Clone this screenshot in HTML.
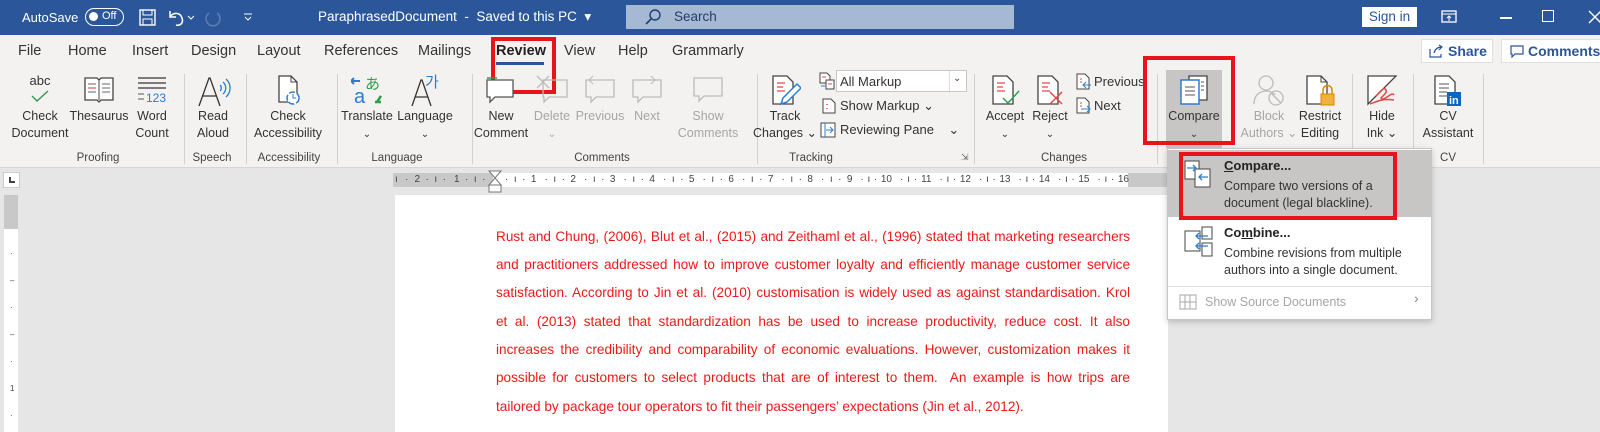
<!DOCTYPE html>
<html><head><meta charset="utf-8">
<style>
*{margin:0;padding:0;box-sizing:border-box}
body{width:1600px;height:432px;overflow:hidden;background:#e6e6e6;font-family:"Liberation Sans",sans-serif;position:relative}
.a{position:absolute}
.title{left:0;top:0;width:1600px;height:35px;background:#2b579a;color:#fff;font-size:13px}
.rib{left:0;top:35px;width:1600px;height:133px;background:#f3f2f1;border-bottom:1px solid #d6d6d6}
.tab{top:43px;font-size:14.5px;color:#333}
.lbl{font-size:12.5px;color:#333;text-align:center;line-height:17px;white-space:nowrap;transform:translateX(-50%);top:108px}
.dis{color:#a6a6a6}
.grp{font-size:11.5px;color:#444;top:152px;transform:translateX(-50%);white-space:nowrap}
.sep{top:74px;width:1px;height:90px;background:#d2d0ce}
.ico{transform:translateX(-50%);top:74px}
.doc{font-size:13.6px;color:#f01818;left:496px;width:634px;white-space:nowrap;text-align:justify;text-align-last:justify}
.small{font-size:12.5px;color:#333;white-space:nowrap}
.ru{position:absolute;top:173px;height:14px;display:flex;font-size:10px;color:#444;white-space:nowrap}
.ru span{display:inline-block;width:39.5px;text-align:justify;text-align-last:justify;line-height:14px}
.rr span{padding-left:8px;margin-right:0}
.rl span{padding-right:8px}
</style></head><body>
<!-- title bar -->
<div class="a title">
 <span class="a" style="left:22px;top:10px">AutoSave</span>
 <div class="a" style="left:85px;top:8px;width:39px;height:18px;border:1.5px solid #fff;border-radius:9px"><div class="a" style="left:3px;top:3px;width:9px;height:9px;border-radius:50%;background:#fff"></div><span class="a" style="left:16px;top:1px;font-size:11px">Off</span></div>
 <svg class="a" style="left:139px;top:9px" width="17" height="17"><rect x="1" y="1" width="15" height="15" fill="none" stroke="#fff" stroke-width="1.4"/><rect x="4" y="1" width="9" height="5" fill="none" stroke="#fff"/><rect x="4" y="10" width="9" height="6" fill="none" stroke="#fff"/></svg>
 <svg class="a" style="left:166px;top:8px" width="30" height="18"><path d="M4 3v6h6M4 9c3-5 10-5 12 1s-3 8-6 7" fill="none" stroke="#fff" stroke-width="1.5"/><path d="M22 8l3 3 3-3" fill="none" stroke="#fff"/></svg>
 <svg class="a" style="left:203px;top:8px" width="20" height="20"><path d="M14 5a7 7 0 1 1-8 0" fill="none" stroke="#5d7fb5" stroke-width="1.5"/></svg>
 <svg class="a" style="left:243px;top:12px" width="10" height="10"><path d="M1 2h8M2 5l3 3 3-3" fill="none" stroke="#fff"/></svg>
 <span class="a" style="left:318px;top:9px;font-size:13.5px">ParaphrasedDocument&nbsp; - &nbsp;Saved to this PC &nbsp;▾</span>
 <div class="a" style="left:626px;top:5px;width:388px;height:24px;background:#a6b9d4"><svg class="a" style="left:18px;top:3px" width="18" height="18"><circle cx="11" cy="7" r="5" fill="none" stroke="#1f3f70" stroke-width="1.4"/><path d="M7 11l-5 5" stroke="#1f3f70" stroke-width="1.6"/></svg><span class="a" style="left:48px;top:4px;color:#223e6b;font-size:13.5px">Search</span></div>
 <div class="a" style="left:1362px;top:7px;width:55px;height:20px;background:#fff;color:#2b579a;font-size:13.5px;text-align:center;line-height:20px">Sign in</div>
 <svg class="a" style="left:1441px;top:10px" width="16" height="14"><rect x="1" y="1" width="14" height="11" fill="none" stroke="#fff" stroke-width="1.3"/><path d="M1 4h14M8 11V6M6 8l2-2 2 2" stroke="#fff" fill="none"/></svg>
 <div class="a" style="left:1500px;top:17px;width:12px;height:1.5px;background:#fff"></div>
 <div class="a" style="left:1542px;top:10px;width:12px;height:12px;border:1.4px solid #fff"></div>
 <svg class="a" style="left:1588px;top:10px" width="12" height="14"><path d="M1 1l12 12M13 1L1 13" stroke="#fff" stroke-width="1.4"/></svg>
</div>
<!-- ribbon -->
<div class="a rib"></div>
<span class="a tab" style="left:18px">File</span>
<span class="a tab" style="left:68px">Home</span>
<span class="a tab" style="left:132px">Insert</span>
<span class="a tab" style="left:191px">Design</span>
<span class="a tab" style="left:257px">Layout</span>
<span class="a tab" style="left:324px">References</span>
<span class="a tab" style="left:418px">Mailings</span>
<span class="a tab" style="left:496px;font-weight:bold;color:#222">Review</span>
<div class="a" style="left:496px;top:62px;width:48px;height:3px;background:#2b579a"></div>
<span class="a tab" style="left:564px">View</span>
<span class="a tab" style="left:618px">Help</span>
<span class="a tab" style="left:672px">Grammarly</span>
<div class="a" style="left:491px;top:37px;width:65px;height:57px;border:4px solid #e8141c"></div>
<div class="a" style="left:1421px;top:39px;width:72px;height:24px;background:#fff;border:1px solid #e1dfdd;color:#2b579a;font-size:14px;font-weight:bold;line-height:22px;padding-left:26px">Share<svg class="a" style="left:7px;top:4px" width="15" height="14"><path d="M1 5v8h11v-3M5 9c1-4 4-6 8-6M10 1l3 2-3 3" fill="none" stroke="#2b579a" stroke-width="1.2"/></svg></div>
<div class="a" style="left:1501px;top:39px;width:100px;height:24px;background:#fff;border:1px solid #e1dfdd;color:#2b579a;font-size:14px;font-weight:bold;line-height:22px;padding-left:26px">Comments<svg class="a" style="left:8px;top:5px" width="14" height="13"><path d="M1 1h12v8H5l-3 3V9H1z" fill="none" stroke="#2b579a" stroke-width="1.2"/></svg></div>

<!-- Proofing -->
<div class="a ico" style="left:40px;font-size:13px;color:#333;top:73px">abc</div>
<svg class="a" style="left:30px;top:89px" width="20" height="14"><path d="M2 7l5 5 11-10" fill="none" stroke="#2e9e48" stroke-width="1.4"/></svg>
<div class="a lbl" style="left:40px">Check<br>Document</div>
<svg class="a ico" style="left:99px" width="32" height="30"><path d="M2 4h12l2 2 2-2h12v22H18l-2 2-2-2H2z" fill="#fff" stroke="#444" stroke-width="1.3"/><path d="M16 6v20" stroke="#444"/><path d="M5 10h8M5 14h8M5 18h8M19 10h8M19 14h8M19 18h8" stroke="#666"/><path d="M5 14h8" stroke="#d33"/></svg>
<div class="a lbl" style="left:99px">Thesaurus</div>
<svg class="a ico" style="left:152px" width="30" height="30"><path d="M1 4h28M1 9h28M1 14h28" stroke="#555" stroke-width="1.4"/><path d="M1 20h6M1 25h6" stroke="#555"/><text x="9" y="28" font-size="12" fill="#2b7cd3" font-family="Liberation Sans">123</text></svg>
<div class="a lbl" style="left:152px">Word<br>Count</div>
<div class="a grp" style="left:98px">Proofing</div>
<div class="a sep" style="left:184px"></div>
<!-- Speech -->
<svg class="a" style="left:197px;top:75px" width="34" height="32"><path d="M2 31L12 3h1l10 28M6 21h13" fill="none" stroke="#333" stroke-width="1.3"/><path d="M23 10a4 4 0 0 1 0 6M26 7a8 8 0 0 1 0 12M29 4a12 12 0 0 1 0 18" fill="none" stroke="#2b7cd3" stroke-width="1.3"/></svg>
<div class="a lbl" style="left:213px">Read<br>Aloud</div>
<div class="a grp" style="left:212px">Speech</div>
<div class="a sep" style="left:246px"></div>
<!-- Accessibility -->
<svg class="a ico" style="left:288px" width="30" height="32"><path d="M6 2h12l6 6v20H6z" fill="#fff" stroke="#444" stroke-width="1.3"/><path d="M18 2v6h6" fill="none" stroke="#444"/><circle cx="20" cy="24" r="6" fill="#fff" stroke="#2b7cd3" stroke-width="1.5" stroke-dasharray="6 2"/><path d="M20 20v4h3" stroke="#2b7cd3" fill="none"/></svg>
<div class="a lbl" style="left:288px">Check<br>Accessibility</div>
<div class="a grp" style="left:289px">Accessibility</div>
<div class="a sep" style="left:337px"></div>
<!-- Language -->
<svg class="a ico" style="left:367px" width="32" height="32"><text x="3" y="29" font-size="20" fill="#2b7cd3" font-family="Liberation Sans">a</text><text x="14" y="15" font-size="15" fill="#2e9e48" font-family="Noto Sans CJK JP">あ</text><path d="M3 4l-3 3 3 3M0 7h9" stroke="#2b7cd3" fill="none" stroke-width="2"/><path d="M30 22l-4 6M30 28h-6" stroke="#2e9e48" stroke-width="2.5"/></svg>
<div class="a lbl" style="left:367px">Translate<br><span style="font-size:10px">⌄</span></div>
<svg class="a" style="left:410px;top:75px" width="32" height="32"><path d="M2 31L11 5h1l9 26M5 22h13" fill="none" stroke="#333" stroke-width="1.3"/></svg>
<div class="a" style="left:425px;top:71px;font-size:15px;color:#2b7cd3;font-family:'Noto Sans CJK KR',sans-serif">가</div>
<div class="a lbl" style="left:425px">Language<br><span style="font-size:10px">⌄</span></div>
<div class="a grp" style="left:397px">Language</div>
<div class="a sep" style="left:472px"></div>
<!-- Comments -->
<svg class="a ico" style="left:501px" width="32" height="30"><path d="M2 6h26v17H10l-5 5v-5H2z" fill="#fff" stroke="#555" stroke-width="1.3"/><path d="M2 4h10" stroke="#2e9e48" stroke-width="1.5"/></svg>
<div class="a lbl" style="left:501px">New<br>Comment</div>
<svg class="a ico" style="left:552px" width="34" height="30"><path d="M8 6h24v17H14l-5 5v-5H8z" fill="none" stroke="#bbb" stroke-width="1.3"/><path d="M2 2l12 12M14 2L2 14" stroke="#bbb" stroke-width="1.3"/></svg>
<div class="a lbl dis" style="left:552px">Delete<br><span style="font-size:10px">⌄</span></div>
<svg class="a ico" style="left:600px" width="32" height="30"><path d="M2 6h28v17H12l-5 5v-5H2z" fill="none" stroke="#bbb" stroke-width="1.3"/><path d="M9 2l-4 4 4 4M5 6h10" stroke="#bbb" fill="none"/></svg>
<div class="a lbl dis" style="left:600px">Previous</div>
<svg class="a ico" style="left:647px" width="32" height="30"><path d="M2 6h28v17H12l-5 5v-5H2z" fill="none" stroke="#bbb" stroke-width="1.3"/><path d="M20 2l4 4-4 4M24 6H12" stroke="#bbb" fill="none"/></svg>
<div class="a lbl dis" style="left:647px">Next</div>
<svg class="a ico" style="left:708px" width="32" height="30"><path d="M2 4h28v18H12l-5 5v-5H2z" fill="none" stroke="#bbb" stroke-width="1.3"/></svg>
<div class="a lbl dis" style="left:708px">Show<br>Comments</div>
<div class="a grp" style="left:602px">Comments</div>
<div class="a sep" style="left:757px"></div>
<!-- Tracking -->
<svg class="a ico" style="left:785px" width="32" height="34"><path d="M4 2h14l6 6v22H4z" fill="#fff" stroke="#444" stroke-width="1.3"/><path d="M8 9h8M8 13h6M8 17h8" stroke="#e04848" stroke-width="1.3"/><path d="M12 30l2-6 14-14 4 4-14 14z" fill="#fff" stroke="#2b7cd3" stroke-width="1.5"/></svg>
<div class="a lbl" style="left:785px">Track<br>Changes ⌄</div>
<svg class="a" style="left:819px;top:72px" width="16" height="18"><path d="M1 1h7l3 3v7H1z" fill="#fff" stroke="#444"/><path d="M7 8h8v9H7z" fill="#fff" stroke="#444"/><path d="M3 5h4M9 12h4" stroke="#e04848"/><path d="M2 14h4" stroke="#2b7cd3"/></svg>
<div class="a" style="left:836px;top:70px;width:131px;height:22px;background:#fff;border:1px solid #c8c6c4"><span class="a small" style="left:3px;top:3px;font-size:13px">All Markup</span><div class="a" style="left:112px;top:0;width:1px;height:20px;background:#ddd"></div><span class="a" style="left:116px;top:2px;font-size:10px;color:#444">⌄</span></div>
<svg class="a" style="left:822px;top:98px" width="14" height="16"><path d="M1 1h8l4 4v10H1z" fill="#fff" stroke="#444"/><path d="M5 6v1M5 10v1" stroke="#e04848" stroke-width="1.5"/></svg>
<span class="a small" style="left:840px;top:98px;font-size:13px">Show Markup ⌄</span>
<svg class="a" style="left:820px;top:122px" width="16" height="16"><rect x="1" y="1" width="14" height="14" fill="#fff" stroke="#444"/><path d="M5 1v14M6 8h7M10 5l3 3-3 3" stroke="#2b7cd3" fill="none"/></svg>
<span class="a small" style="left:840px;top:122px;font-size:13px">Reviewing Pane &nbsp;&nbsp;&nbsp;⌄</span>
<div class="a grp" style="left:811px">Tracking</div>
<span class="a" style="left:961px;top:152px;font-size:9px;color:#666">⇲</span>
<div class="a sep" style="left:974px"></div>
<!-- Changes -->
<svg class="a ico" style="left:1005px" width="32" height="34"><path d="M4 2h14l6 6v22H4z" fill="#fff" stroke="#444" stroke-width="1.3"/><path d="M8 9h8M8 13h6M8 17h8" stroke="#e04848" stroke-width="1.3"/><path d="M14 24l5 5 11-12" fill="none" stroke="#2e9e48" stroke-width="1.5"/></svg>
<div class="a lbl" style="left:1005px">Accept<br><span style="font-size:10px">⌄</span></div>
<svg class="a ico" style="left:1050px" width="32" height="34"><path d="M4 2h14l6 6v22H4z" fill="#fff" stroke="#444" stroke-width="1.3"/><path d="M8 9h8M8 13h6M8 17h8" stroke="#e04848" stroke-width="1.3"/><path d="M16 18l12 12M28 18L16 30" stroke="#e04848" stroke-width="1.5"/></svg>
<div class="a lbl" style="left:1050px">Reject<br><span style="font-size:10px">⌄</span></div>
<svg class="a" style="left:1076px;top:73px" width="16" height="18"><path d="M1 1h8l4 4v11H1z" fill="#fff" stroke="#444"/><path d="M4 6h2M4 9h2" stroke="#e04848"/><path d="M15 12H7M10 9l-3 3 3 3" stroke="#2b7cd3" fill="none"/></svg>
<span class="a small" style="left:1094px;top:74px;font-size:13px">Previous</span>
<svg class="a" style="left:1076px;top:97px" width="16" height="18"><path d="M1 1h8l4 4v11H1z" fill="#fff" stroke="#444"/><path d="M4 6h2M4 9h2" stroke="#e04848"/><path d="M5 12h9M11 9l3 3-3 3" stroke="#2b7cd3" fill="none"/></svg>
<span class="a small" style="left:1094px;top:98px;font-size:13px">Next</span>
<div class="a grp" style="left:1064px">Changes</div>
<div class="a sep" style="left:1157px"></div>
<!-- Compare -->
<div class="a" style="left:1166px;top:70px;width:56px;height:78px;background:#c8c6c4"></div>
<svg class="a ico" style="left:1194px" width="32" height="34"><path d="M11 2h18v24H11z" fill="#fff" stroke="#444" stroke-width="1.3"/><path d="M3 6h18v24H3z" fill="#fff" stroke="#2b7cd3" stroke-width="1.5"/><path d="M7 13h10M7 17h10M7 21h10M23 8h3M23 12h3M23 16h3" stroke="#555"/></svg>
<div class="a lbl" style="left:1194px">Compare<br><span style="font-size:10px">⌄</span></div>
<div class="a" style="left:1143px;top:56px;width:92px;height:89px;border:4px solid #e8141c"></div>
<svg class="a ico" style="left:1269px" width="32" height="32"><circle cx="13" cy="9" r="7" fill="none" stroke="#bbb" stroke-width="1.3"/><path d="M1 30c0-9 6-13 12-13 4 0 7 1 9 4" fill="none" stroke="#bbb" stroke-width="1.3"/><circle cx="23" cy="24" r="7" fill="none" stroke="#bbb" stroke-width="1.3"/><path d="M18 19l10 10" stroke="#bbb" stroke-width="1.3"/></svg>
<div class="a lbl dis" style="left:1269px">Block<br>Authors ⌄</div>
<svg class="a ico" style="left:1320px" width="32" height="34"><path d="M3 2h14l6 6v22H3z" fill="#fff" stroke="#444" stroke-width="1.3"/><path d="M17 2v6h6" fill="none" stroke="#444"/><rect x="17" y="20" width="13" height="11" fill="#f4b03c" stroke="#d48a0a"/><path d="M19 20v-4a4 4 0 0 1 9 0v4" fill="none" stroke="#d48a0a" stroke-width="1.5"/></svg>
<div class="a lbl" style="left:1320px">Restrict<br>Editing</div>
<div class="a sep" style="left:1352px"></div>
<svg class="a ico" style="left:1382px" width="32" height="32"><path d="M2 2h28L2 30z" fill="#fff" stroke="#444" stroke-width="1.3"/><path d="M10 22c4-4 8-10 10-6s-8 8-4 9 10-8 12-4M4 30c6-2 12-6 24-4" fill="none" stroke="#e04848" stroke-width="1.5"/></svg>
<div class="a lbl" style="left:1382px">Hide<br>Ink ⌄</div>
<div class="a sep" style="left:1413px"></div>
<svg class="a ico" style="left:1448px" width="32" height="34"><path d="M3 2h14l6 6v22H3z" fill="#fff" stroke="#444" stroke-width="1.3"/><path d="M7 10h10M7 14h10M7 18h8M7 22h8" stroke="#555"/><rect x="15" y="18" width="14" height="14" fill="#0a66c2"/><text x="17" y="30" font-size="11" font-weight="bold" fill="#fff" font-family="Liberation Sans">in</text></svg>
<div class="a lbl" style="left:1448px">CV<br>Assistant</div>
<div class="a grp" style="left:1448px">CV</div>
<div class="a sep" style="left:1483px"></div>

<!-- rulers -->
<div class="a" style="left:3px;top:172px;width:17px;height:16px;background:#fff;border:1px solid #ccc"><div class="a" style="left:5px;top:4px;width:6px;height:6px;border-left:2px solid #444;border-bottom:2px solid #444"></div></div>
<div class="a" style="left:4px;top:195px;width:14px;height:34px;background:#c8c8c8"></div>
<div class="a" style="left:4px;top:229px;width:14px;height:203px;background:#fff"></div>
<div class="a" style="left:10px;top:240px;font-size:8px;color:#444;line-height:27px">·<br>–<br>·<br>–<br>·<br>1<br>·</div>
<div class="a" style="left:393px;top:173px;width:775px;height:14px;background:#fff"></div>
<div class="a" style="left:393px;top:173px;width:100px;height:14px;background:#c8c8c8"></div>
<div class="a" style="left:1128px;top:173px;width:40px;height:14px;background:#c8c8c8"></div>
<div class="ru rl" style="left:395px"><span style="width:19.5px;padding-right:6px">ı&nbsp;·</span><span>2&nbsp;·&nbsp;ı&nbsp;·</span><span>1&nbsp;·&nbsp;ı&nbsp;·</span></div>
<div class="ru rr" style="left:497px"><span>·&nbsp;ı&nbsp;·&nbsp;1</span><span>·&nbsp;ı&nbsp;·&nbsp;2</span><span>·&nbsp;ı&nbsp;·&nbsp;3</span><span>·&nbsp;ı&nbsp;·&nbsp;4</span><span>·&nbsp;ı&nbsp;·&nbsp;5</span><span>·&nbsp;ı&nbsp;·&nbsp;6</span><span>·&nbsp;ı&nbsp;·&nbsp;7</span><span>·&nbsp;ı&nbsp;·&nbsp;8</span><span>·&nbsp;ı&nbsp;·&nbsp;9</span><span>·&nbsp;ı&nbsp;·&nbsp;10</span><span>·&nbsp;ı&nbsp;·&nbsp;11</span><span>·&nbsp;ı&nbsp;·&nbsp;12</span><span>·&nbsp;ı&nbsp;·&nbsp;13</span><span>·&nbsp;ı&nbsp;·&nbsp;14</span><span>·&nbsp;ı&nbsp;·&nbsp;15</span><span>·&nbsp;ı&nbsp;·&nbsp;16</span></div>
<svg class="a" style="left:488px;top:170px" width="14" height="24"><path d="M1 1h12L7 8z" fill="#fff" stroke="#777"/><path d="M1 15h12L7 8z" fill="#fff" stroke="#777"/><rect x="1" y="15" width="12" height="7" fill="#fff" stroke="#777"/></svg>
<div class="a" style="left:395px;top:195px;width:773px;height:237px;background:#fff"></div>
<!-- doc text -->
<div class="a doc" style="top:229px">Rust and Chung, (2006), Blut et al., (2015) and Zeithaml et al., (1996) stated that marketing researchers</div>
<div class="a doc" style="top:257px">and practitioners addressed how to improve customer loyalty and efficiently manage customer service</div>
<div class="a doc" style="top:285px">satisfaction. According to Jin et al. (2010) customisation is widely used as against standardisation. Krol</div>
<div class="a doc" style="top:314px">et al. (2013) stated that standardization has be used to increase productivity, reduce cost. It also</div>
<div class="a doc" style="top:342px">increases the credibility and comparability of economic evaluations. However, customization makes it</div>
<div class="a doc" style="top:370px">possible for customers to select products that are of interest to them.&nbsp; An example is how trips are</div>
<div class="a doc" style="top:399px;text-align-last:left">tailored by package tour operators to fit their passengers’ expectations (Jin et al., 2012).</div>

<!-- dropdown menu -->
<div class="a" style="left:1167px;top:148px;width:265px;height:172px;background:#fff;border:1px solid #c8c6c4;box-shadow:0 2px 6px rgba(0,0,0,.2)"></div>
<div class="a" style="left:1168px;top:150px;width:263px;height:67px;background:#c8c6c4"></div>
<div class="a" style="left:1179px;top:152px;width:218px;height:68px;border:4px solid #e8141c"></div>
<svg class="a" style="left:1184px;top:160px" width="32" height="30"><rect x="1" y="1" width="14" height="18" fill="#fff" stroke="#444"/><rect x="11" y="9" width="15" height="18" fill="#fff" stroke="#444"/><path d="M3 8h9M9 5l3 3-3 3" stroke="#2b7cd3" fill="none" stroke-width="1.3"/><path d="M24 17h-9M18 14l-3 3 3 3" stroke="#2b7cd3" fill="none" stroke-width="1.3"/></svg>
<div class="a" style="left:1224px;top:158px;font-size:13px;font-weight:bold;color:#222"><u>C</u>ompare...</div>
<div class="a" style="left:1224px;top:178px;font-size:12.5px;color:#333;line-height:17px">Compare two versions of a<br>document (legal blackline).</div>
<svg class="a" style="left:1184px;top:226px" width="32" height="32"><rect x="1" y="5" width="15" height="20" fill="#fff" stroke="#444"/><rect x="18" y="1" width="10" height="12" fill="#fff" stroke="#444"/><rect x="18" y="17" width="10" height="13" fill="#fff" stroke="#444"/><path d="M24 10h-12M15 7l-3 3 3 3M24 20h-12M15 17l-3 3 3 3" stroke="#2b7cd3" fill="none" stroke-width="1.3"/></svg>
<div class="a" style="left:1224px;top:225px;font-size:13px;font-weight:bold;color:#222">Co<u>m</u>bine...</div>
<div class="a" style="left:1224px;top:245px;font-size:12.5px;color:#333;line-height:17px">Combine revisions from multiple<br>authors into a single document.</div>
<div class="a" style="left:1168px;top:286px;width:263px;height:1px;background:#e1dfdd"></div>
<svg class="a" style="left:1179px;top:294px" width="18" height="16"><rect x="1" y="1" width="16" height="14" fill="none" stroke="#aaa"/><path d="M1 8h16M6 1v14M11 1v14" stroke="#aaa"/></svg>
<div class="a" style="left:1205px;top:295px;font-size:12.5px;color:#a6a6a6">Show Source Documents</div>
<div class="a" style="left:1414px;top:290px;font-size:14px;color:#888">›</div>
</body></html>
